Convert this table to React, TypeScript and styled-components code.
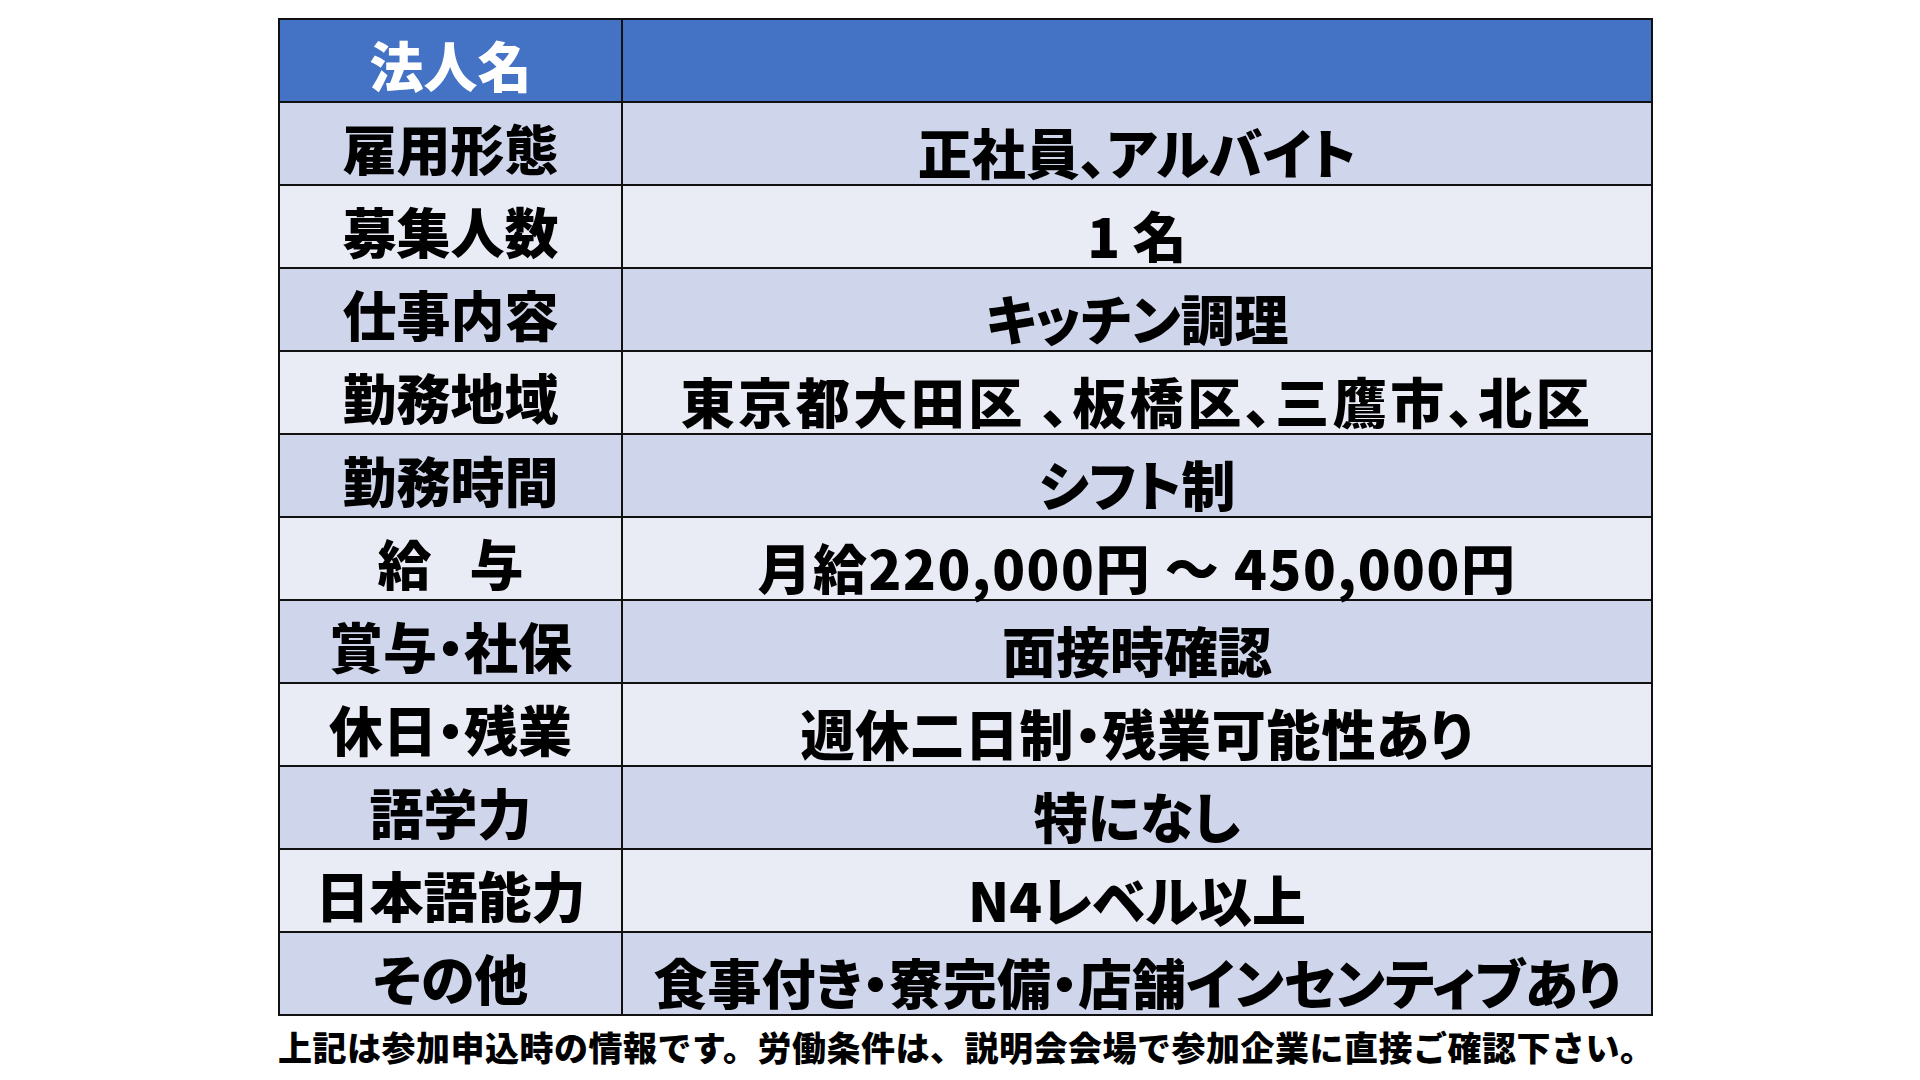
import React from "react";
import styled, { createGlobalStyle } from "styled-components";

type Row = { label: string; value: string; spacing?: number };

const rows: Row[] = [
    { label: "雇用形態", value: "正社員、アルバイト" },
    { label: "募集人数", value: "1 名" },
    { label: "仕事内容", value: "キッチン調理" },
    { label: "勤務地域", value: "東京都大田区 、板橋区、三鷹市、北区", spacing: 3.5 },
    { label: "勤務時間", value: "シフト制" },
    { label: "給\u2002\u2009与", value: "月給220,000円 ～ 450,000円", spacing: 1.5 },
    { label: "賞与・社保", value: "面接時確認" },
    { label: "休日・残業", value: "週休二日制・残業可能性あり", spacing: 0.8 },
    { label: "語学力", value: "特になし" },
    { label: "日本語能力", value: "N4レベル以上" },
    { label: "その他", value: "食事付き・寮完備・店舗インセンティブあり" },
];

export default function App() {
    return (
        <>
            <GlobalStyle />
            <Page>
                <Table>
                    <tbody>
                        <tr>
                            <HeadCell>法人名</HeadCell>
                            <HeadCell />
                        </tr>
                        {rows.map((row, i) => (
                            <tr key={row.label}>
                                <LabelCell $odd={i % 2 === 0}>{row.label}</LabelCell>
                                <ValueCell $odd={i % 2 === 0} $spacing={row.spacing ?? 0}>
                                    {row.value}
                                </ValueCell>
                            </tr>
                        ))}
                    </tbody>
                </Table>
                <Note>
                    上記は参加申込時の情報です。労働条件は、説明会会場で参加企業に直接ご確認下さい。
                </Note>
            </Page>
        </>
    );
}

const GlobalStyle = createGlobalStyle`
  html, body {
    margin: 0;
    padding: 0;
    background: #ffffff;
  }
  body {
    width: 1920px;
    height: 1080px;
    overflow: hidden;
    font-family: "Noto Sans CJK JP", "Noto Sans", sans-serif;
    color: #000;
  }
`;

const Page = styled.div`
  display: flex;
  flex-direction: column;
  align-items: flex-start;
  padding: 18px 0 0 278px;
`;

const Table = styled.table`
  width: 1375px;
  border-collapse: collapse;
  table-layout: fixed;
  border: 2px solid #111;
`;

const Cell = styled.td`
  height: 83px;
  box-sizing: border-box;
  border: 2px solid #111;
  text-align: center;
  vertical-align: middle;
  font-weight: 900;
  font-size: 54px;
  line-height: 1;
  font-feature-settings: "palt";
  white-space: nowrap;
  padding: 0;
`;

const HeadCell = styled(Cell)`
  background: #4472c4;
  color: #ffffff;
  padding-top: 8px;

  &:first-child {
    width: 343px;
  }
`;

const LabelCell = styled(Cell)<{ $odd: boolean }>`
  background: ${(p) => (p.$odd ? "#cfd5ea" : "#e9ebf5")};
  padding-top: 8px;
`;

const ValueCell = styled(Cell)<{ $odd: boolean; $spacing: number }>`
  background: ${(p) => (p.$odd ? "#cfd5ea" : "#e9ebf5")};
  padding-top: 17px;
  letter-spacing: ${(p) => p.$spacing}px;
`;

const Note = styled.div`
  margin-top: 11px;
  font-weight: 900;
  font-size: 34px;
  letter-spacing: 0.5px;
  line-height: 1.15;
  white-space: nowrap;
`;
